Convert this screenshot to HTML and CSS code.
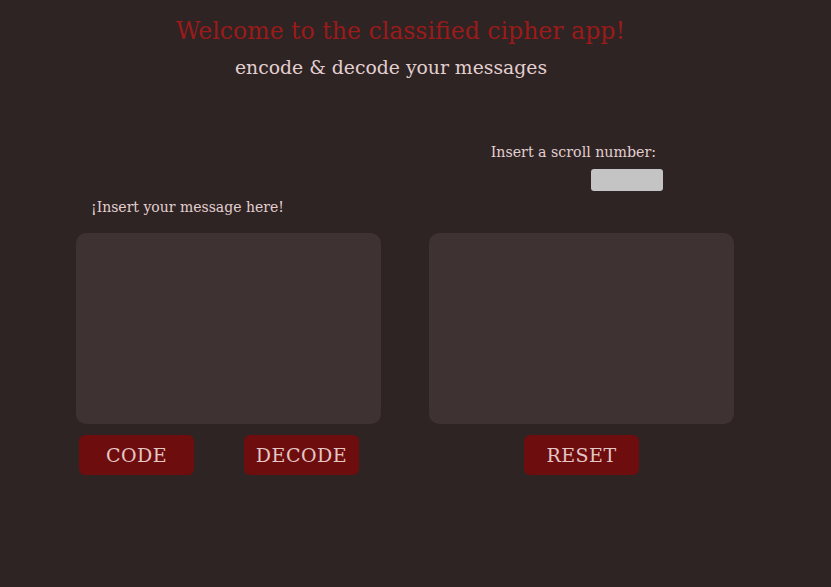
FILE: index.html
```html
<!DOCTYPE html>
<html>
<head>
<meta charset="utf-8">
<link rel="stylesheet" href="styles.css">
</head>
<body>
<header class="header">
  <h1 class="title">Welcome to the classified cipher app!</h1>
  <h2 class="subtitle">encode &amp; decode your messages</h2>
</header>
<main class="app">
  <div class="scroll-row">
    <label class="scroll-label" for="scroll">Insert a scroll number:</label>
    <input class="scroll-input" id="scroll" type="number">
  </div>
  <p class="msg-label">¡Insert your message here!</p>
  <div class="boxes">
    <div class="col">
      <textarea class="box"></textarea>
      <div class="btns">
        <button class="btn">CODE</button>
        <button class="btn">DECODE</button>
      </div>
    </div>
    <div class="col">
      <textarea class="box" readonly></textarea>
      <div class="btns center">
        <button class="btn">RESET</button>
      </div>
    </div>
  </div>
</main>
</body>
</html>
```
FILE: styles.css
```css
* { box-sizing: border-box; }
html, body { margin: 0; padding: 0; }
body {
  background: #2e2424;
  width: 831px;
  height: 587px;
  font-family: "DejaVu Serif", serif;
  color: #e3cfcf;
  overflow: hidden;
}
.header {
  padding-top: 16px;
  display: flex;
  flex-direction: column;
  align-items: flex-start;
}
.title {
  margin: 0 0 0 176px;
  font-size: 23.6px;
  font-weight: normal;
  color: #9b1a1a;
  line-height: 30px;
}
.subtitle {
  margin: 10px 0 0 235px;
  font-size: 18.8px;
  font-weight: normal;
  color: #e3cfcf;
  line-height: 24px;
}
.app { padding-top: 63px; }
.scroll-row {
  display: flex;
  flex-direction: column;
  align-items: flex-end;
  width: 663px;
}
.scroll-label {
  font-size: 14.2px;
  line-height: 18px;
  margin-right: 7px;
}
.scroll-input {
  margin-top: 8px;
  width: 72px;
  height: 22px;
  border: none;
  border-radius: 3px;
  background: #c4c4c4;
}
.msg-label {
  margin: 7px 0 0 91px;
  font-size: 14px;
  line-height: 18px;
}
.boxes {
  display: flex;
  gap: 48px;
  padding-left: 76px;
  margin-top: 17px;
}
.col { width: 305px; }
.box {
  display: block;
  width: 305px;
  height: 191px;
  border: none;
  border-radius: 10px;
  background: #3e3232;
  resize: none;
}
.btns {
  display: flex;
  gap: 50px;
  margin-top: 11px;
  padding-left: 3px;
}
.btns.center { justify-content: center; padding-left: 0; }
.btn {
  width: 115px;
  height: 40px;
  border: none;
  border-radius: 6px;
  background: #6e0d0d;
  color: #e3c6c6;
  font-family: "DejaVu Serif", serif;
  font-size: 19px;
  letter-spacing: 0.5px;
}
```
